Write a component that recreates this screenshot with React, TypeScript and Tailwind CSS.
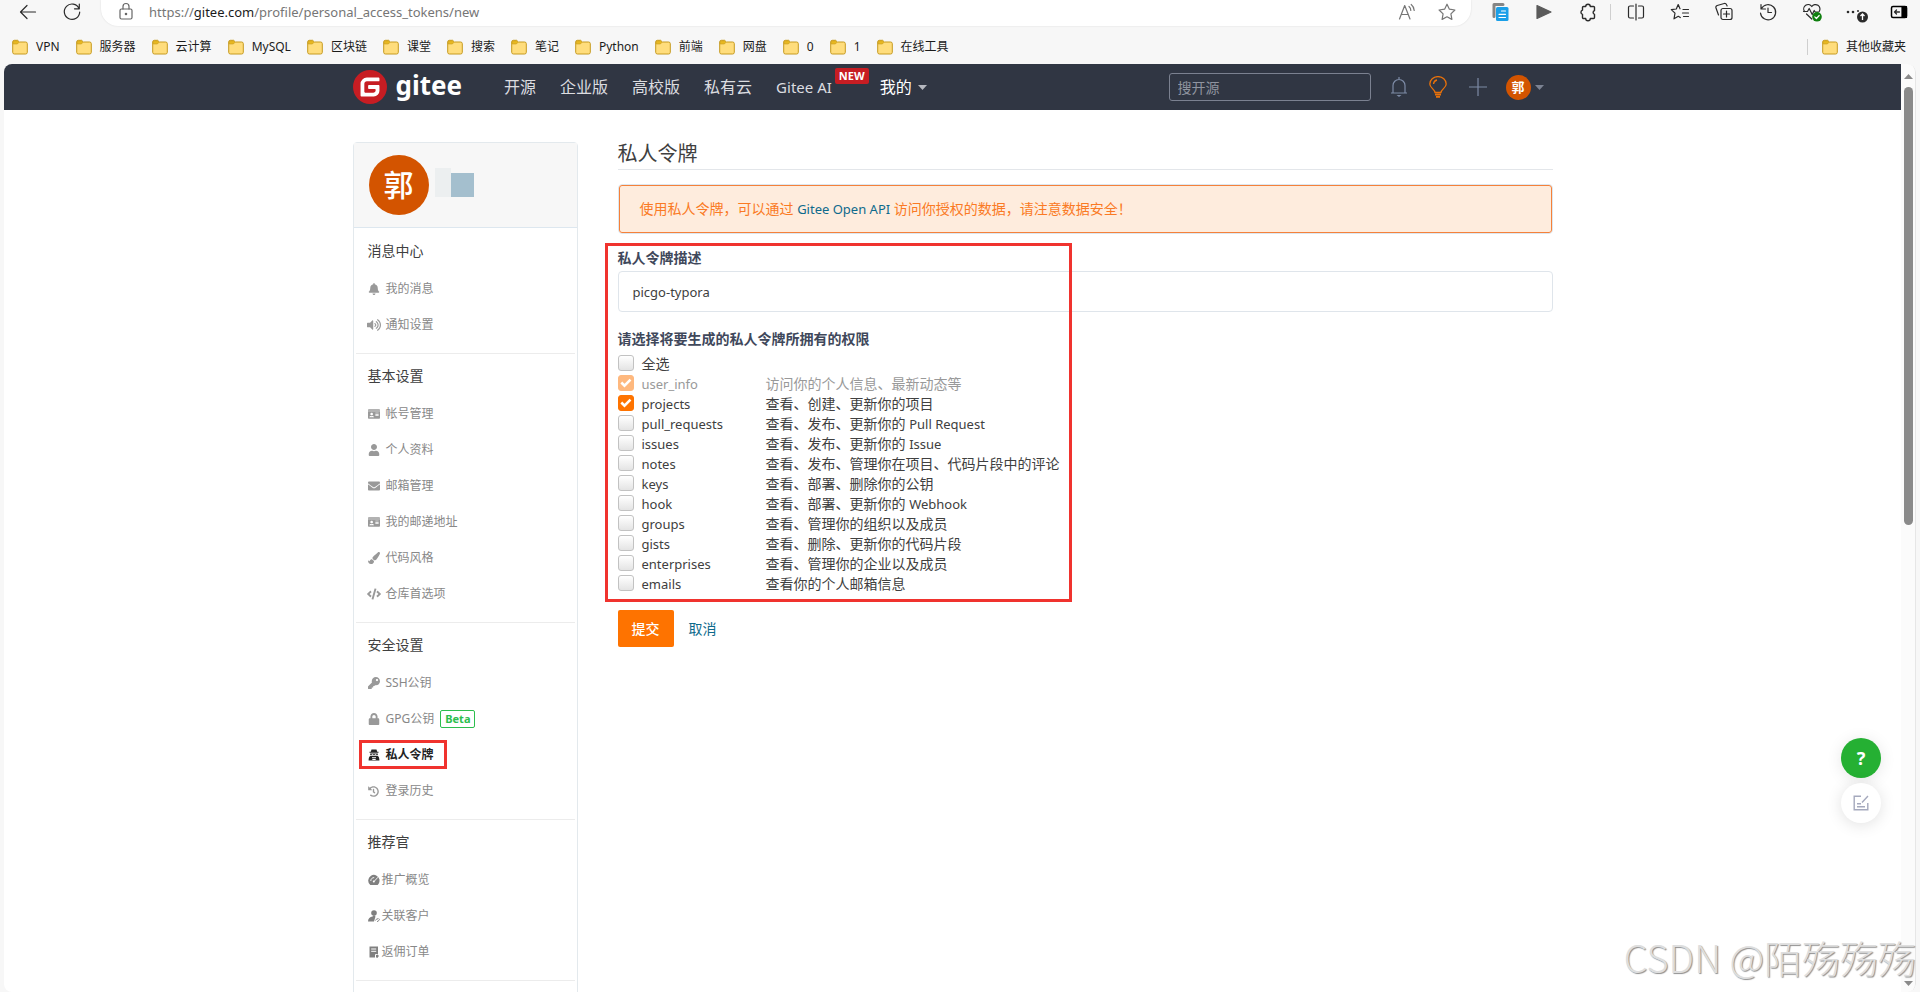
import type { ReactNode } from "react";
import {
  FaBell,
  FaCode,
  FaEnvelope,
  FaHistory,
  FaIdCard,
  FaKey,
  FaLock,
  FaPaintBrush,
  FaUser,
  FaVolumeUp,
} from "react-icons/fa";

/* ---------- Browser chrome ---------- */

function Glyph({ size = 20, children, label }: { size?: number; children: ReactNode; label: string }) {
  return (
    <svg
      width={size}
      height={size}
      viewBox="0 0 20 20"
      fill="none"
      stroke="currentColor"
      strokeWidth="1.2"
      strokeLinecap="round"
      strokeLinejoin="round"
      role="img"
      aria-label={label}
    >
      {children}
    </svg>
  );
}

function ToolButton({ children }: { children: ReactNode }) {
  return (
    <button type="button" className="flex h-[24px] w-[44px] shrink-0 items-center justify-center text-[#2b2b2b] last:w-[42px]">
      {children}
    </button>
  );
}

function FolderIcon() {
  return (
    <svg width="16" height="16" viewBox="0 0 16 16" className="shrink-0" aria-hidden="true">
      <path
        d="M.7 3A1.7 1.7 0 0 1 2.4 1.3h3.2L7.4 3h6.2a1.7 1.7 0 0 1 1.7 1.7v8.6a1.7 1.7 0 0 1-1.7 1.7H2.4A1.7 1.7 0 0 1 .7 13.300z"
        fill="#ffdd7c"
        stroke="#c69a1f"
      />
      <path d="M1.200 5V3A1.200 1.200 0 0 1 2.400 1.800h3L7 3.300 5.400 5z" fill="#e8b820" stroke="#c69a1f" strokeWidth=".6" />
    </svg>
  );
}

const bookmarks = ["VPN", "服务器", "云计算", "MySQL", "区块链", "课堂", "搜索", "笔记", "Python", "前端", "网盘", "0", "1", "在线工具"];

function Bookmark({ name }: { name: string }) {
  return (
    <a href="#" className="flex items-center gap-2 text-[12px] leading-[16px] whitespace-nowrap text-[#1b1b1b]">
      <FolderIcon />
      {name}
    </a>
  );
}

function BrowserBar() {
  return (
    <div className="shrink-0">
      <div className="flex h-[30px] items-start">
        <div className="flex h-[24px] items-center gap-[24px] pl-[18px] text-[#2b2b2b]">
          <button type="button">
            <Glyph label="后退">
              <path d="M17.500 10H2.500M9 3.500 2.500 10 9 16.500" />
            </Glyph>
          </button>
          <button type="button">
            <Glyph label="刷新">
              <path d="M17 6.500A7.700 7.700 0 1 0 17.700 10M17.300 2v4.800h-4.800" />
            </Glyph>
          </button>
        </div>
        <div className="ml-[19px] flex h-[26px] min-w-0 flex-1 items-start rounded-b-[17px] bg-white shadow-[0_0_2px_rgba(0,0,0,0.12)]">
          <div className="flex h-[24px] w-full items-center pr-[14px] pl-[15px]">
            <span className="text-[#666]">
              <Glyph label="安全连接">
                <rect x="4" y="7" width="12" height="10" rx="1.500" />
                <path d="M7 7V4.500a3 3 0 0 1 6 0V7" />
                <circle cx="10" cy="12" r=".7" fill="currentColor" />
              </Glyph>
            </span>
            <span className="ml-[13px] flex-1 text-[13px] leading-[20px] text-[#767676]">
              https://<span className="text-[#1b1b1b]">gitee.com</span>/profile/personal_access_tokens/new
            </span>
            <div className="flex gap-[20px] text-[#767676]">
              <Glyph label="朗读">
                <path d="M2.500 17 7.700 3.500 13 17M4.200 12.500h7M12 4.500a5 5 0 0 1 1.800 4M14.200 2.500a8 8 0 0 1 3 6" />
              </Glyph>
              <Glyph label="收藏">
                <path d="m10 2.200 2.400 5 5.500.8-4 3.900 1 5.500-4.900-2.600-4.900 2.600 1-5.500-4-3.900 5.500-.8z" />
              </Glyph>
            </div>
          </div>
        </div>
        <div className="ml-[7px] flex h-[24px] items-center">
          <ToolButton>
            <Glyph label="文档">
              <path d="M4 14.500V2.500h9" stroke="#858585" strokeWidth="3" />
              <rect x="6" y="5" width="12.500" height="14" rx="1.500" fill="#1a9fe8" stroke="none" />
              <path d="M11.500 9h4M9 12.300h6.500M9 15.500h6.500" stroke="#fff" />
            </Glyph>
          </ToolButton>
          <ToolButton>
            <Glyph label="播放">
              <path d="M3 3.500v13L17 10z" fill="#5b5b5b" stroke="#5b5b5b" />
            </Glyph>
          </ToolButton>
          <ToolButton>
            <Glyph label="扩展">
              <path
                d="M7.700 4.500a2.300 2.300 0 0 1 4.600 0h3.200a1 1 0 0 1 1 1v3a2 2 0 0 0 0 3.800v3.200a1 1 0 0 1-1 1h-3.200a2.300 2.300 0 0 1-4.600 0H5.500a1 1 0 0 1-1-1v-3.200a2.200 2.200 0 0 1 0-4.200V5.500a1 1 0 0 1 1-1z"
                strokeWidth="1.400"
              />
            </Glyph>
          </ToolButton>
          <div className="h-[16px] w-[4px] border-l border-[#cfcfcf]" />
          <ToolButton>
            <Glyph label="分屏">
              <path d="M7.500 4H4a1.500 1.500 0 0 0-1.500 1.500v9A1.500 1.500 0 0 0 4 16h3.500M12.500 4H16a1.500 1.500 0 0 1 1.500 1.500v9A1.500 1.500 0 0 1 16 16h-3.500M10 2v16" />
            </Glyph>
          </ToolButton>
          <ToolButton>
            <Glyph label="收藏夹">
              <path d="M13 7.500h5.500M12.500 11h6M13.500 14.500h5M10 6.800 8.200 2.500 6.300 7l-5 .6 3.700 3.500-1 5.700 4.300-2.500 2 1.200" />
            </Glyph>
          </ToolButton>
          <ToolButton>
            <Glyph label="集锦">
              <rect x="7" y="6.500" width="11" height="11" rx="2" />
              <path d="M12.500 9v6M9.500 12h6M4.500 13 2 6a2 2 0 0 1 1.200-2.500l7-2a2 2 0 0 1 2.500 1.400l.4 1.100" />
            </Glyph>
          </ToolButton>
          <ToolButton>
            <Glyph label="历史记录">
              <path d="M3 2.500V7h4.500M3.300 6.800a7.600 7.600 0 1 1-.8 4.200M10 6v4.500h3.500" />
            </Glyph>
          </ToolButton>
          <ToolButton>
            <Glyph label="浏览器概要">
              <path d="M2.500 9.500a4.200 4.200 0 0 1 7.300-5 4.200 4.200 0 0 1 7.400 5M4.500 12l5.300 5M1.500 9.500h4l1.700-3 3 6 2-4 1 1.500h3" />
              <circle cx="15" cy="14.800" r="4.800" fill="#108010" stroke="none" />
              <path d="m12.800 14.900 1.600 1.600 2.800-3" stroke="#fff" />
            </Glyph>
          </ToolButton>
          <ToolButton>
            <svg width="24" height="22" viewBox="0 0 24 22" role="img" aria-label="设置及其他">
              <g fill="#2b2b2b">
                <circle cx="4" cy="11" r="1.300" />
                <circle cx="9" cy="11" r="1.300" />
                <circle cx="14" cy="10" r="1" />
                <circle cx="18.500" cy="16" r="5.500" />
              </g>
              <path d="M18.500 19v-6m-2 2 2-2 2 2" stroke="#fff" strokeWidth="1.300" fill="none" />
            </svg>
          </ToolButton>
          <ToolButton>
            <Glyph label="侧边栏">
              <rect x="2.500" y="4.500" width="15" height="11" rx="1.500" strokeWidth="1.500" stroke="#000" />
              <path d="M13 4.500h4.500v11H13z" fill="#000" stroke="#000" />
              <path d="M10.500 10H5.500m2-2-2 2 2 2" strokeWidth="1.300" />
            </Glyph>
          </ToolButton>
        </div>
      </div>
      <nav aria-label="书签" className="flex h-[34px] items-center gap-4 pr-[14px] pl-[12px]">
        {bookmarks.map((name) => (
          <Bookmark key={name} name={name} />
        ))}
        <div className="ml-auto flex items-center gap-[14px]">
          <div className="h-[16px] border-l border-[#cfcfcf]" />
          <Bookmark name="其他收藏夹" />
        </div>
      </nav>
    </div>
  );
}

/* ---------- Site header ---------- */

function Caret({ className }: { className: string }) {
  return (
    <svg width="9" height="5" viewBox="0 0 9 5" className={className} aria-hidden="true">
      <path d="M0 0h9L4.500 5z" fill="currentColor" />
    </svg>
  );
}

function SiteHeader() {
  return (
    <header className="h-[46px] bg-[#303643]">
      <div className="mx-auto flex h-full max-w-[1200px] items-center pr-[9px]">
        <a href="#" className="flex items-center gap-[9px] text-white">
          <svg width="34" height="34" viewBox="0 0 24 24" aria-hidden="true">
            <circle cx="12" cy="12" r="11" fill="#fff" />
            <path
              fill="#c71d23"
              d="M11.984 0A12 12 0 0 0 0 12a12 12 0 0 0 12 12 12 12 0 0 0 12-12A12 12 0 0 0 12 0a12 12 0 0 0-.016 0zm6.090 5.333c.328 0 .593.266.592.593v1.482a.594.594 0 0 1-.593.592H9.777c-.982 0-1.778.796-1.778 1.778v5.630c0 .327.266.592.593.592h5.630c.982 0 1.778-.796 1.778-1.778v-.296a.593.593 0 0 0-.592-.593h-4.150a.592.592 0 0 1-.592-.592v-1.482a.593.593 0 0 1 .593-.592h6.815c.327 0 .593.265.593.592v3.408a4 4 0 0 1-4 4H5.926a.593.593 0 0 1-.593-.593V9.778a4.444 4.444 0 0 1 4.445-4.444h8.296z"
            />
          </svg>
          <span className="pb-[4px] text-[26px] leading-[30px] font-bold">gitee</span>
        </a>
        <nav aria-label="主导航" className="ml-[42px] flex items-center gap-[24px] text-[16px] leading-[24px] whitespace-nowrap text-[#dcdde0]">
          <a href="#">开源</a>
          <a href="#">企业版</a>
          <a href="#">高校版</a>
          <a href="#">私有云</a>
          <a href="#" className="relative mr-[24px] text-[15px]">
            Gitee AI
            <span className="absolute -top-[7px] left-full ml-[3px] rounded-[2px] bg-[#c71d23] px-[4px] text-[11px] leading-[16px] font-bold text-white">
              NEW
            </span>
          </a>
          <a href="#" className="flex items-center gap-[6px] text-white">
            我的
            <Caret className="text-[#b5b8bf]" />
          </a>
        </nav>
        <input
          type="search"
          aria-label="搜开源"
          placeholder="搜开源"
          className="ml-auto h-[28px] w-[202px] rounded-[3px] border border-[#7b8190] bg-transparent px-[8px] text-[14px] text-white placeholder:text-[#8f949f]"
        />
        <button type="button" aria-label="通知" className="ml-[18px] text-[#7d8ba6]">
          <svg width="20" height="22" viewBox="0 0 20 22" fill="none" stroke="currentColor" strokeWidth="1.200">
            <path d="M2 17h16M4 17V9.500a6 6 0 0 1 12 0V17M10 3.500V1" />
            <path d="M7.500 19h5L10 21z" fill="currentColor" stroke="none" />
          </svg>
        </button>
        <button type="button" aria-label="提示" className="ml-[20px] text-[#e8710a]">
          <svg width="18" height="22" viewBox="0 0 18 22" fill="none" stroke="currentColor" strokeWidth="1.300">
            <path d="M6 16.500C5.800 13 .8 12 .8 8a8.200 7.400 0 0 1 16.400 0c0 4-5 5-5.200 8.500zM4.500 8A4.500 4.500 0 0 1 8 4" />
            <path d="M6 18.500h6M7 20.800h4" strokeWidth="1.800" />
          </svg>
        </button>
        <button type="button" aria-label="新建" className="ml-[22px] text-[#7d8ba6]">
          <svg width="18" height="18" viewBox="0 0 18 18" stroke="currentColor" strokeWidth="1.200">
            <path d="M9 0v18M0 9h18" />
          </svg>
        </button>
        <button type="button" aria-label="账户" className="ml-[19px] flex items-center gap-[4px]">
          <span className="flex size-[25px] items-center justify-center rounded-full bg-[#d35400] text-[13px] leading-[20px] font-bold text-white">
            郭
          </span>
          <Caret className="text-[#7b8292]" />
        </button>
      </div>
    </header>
  );
}

/* ---------- Sidebar ---------- */

function TokenIcon() {
  return (
    <svg width="12" height="12" viewBox="0 0 12 12" fill="currentColor" aria-hidden="true">
      <path d="M3.500.5h5l.7 2.200h1.300v1H1.500v-1h1.300zM2.200 4.500h7.600v1.700H2.200zM.6 11.500c0-2.500.5-4 1.700-4.600h7.400c1.200.6 1.700 2.100 1.700 4.600z" />
      <path d="M3.700 5.100h1.600v.7H3.700zM6.700 5.100h1.600v.7H6.700zM4 8.300h4v.7H4zM4.300 9.800h3.400v1.200H4.300z" fill="#fff" />
    </svg>
  );
}

function DashboardIcon() {
  return (
    <svg width="12" height="12" viewBox="0 0 12 12" aria-hidden="true">
      <path d="M2.300 11A5.700 5.700 0 1 1 11.500 5.500c.2 2.500-.5 4.300-1.800 5.500z" fill="currentColor" />
      <path d="M2.800 7a3.200 3.200 0 0 1 3.400-3.400M6 7.500l4-4.300" stroke="#fff" strokeWidth=".9" fill="none" />
      <circle cx="5.800" cy="7.500" r="1" fill="#fff" />
    </svg>
  );
}

function CustomerIcon() {
  return (
    <svg width="12" height="12" viewBox="0 0 12 12" aria-hidden="true">
      <circle cx="6" cy="3" r="2.800" fill="currentColor" />
      <path d="M0 11.500C0 8.500 2 7 4.500 6.500L6 5l1.500 1.500-1.500 5z" fill="currentColor" />
      <path d="m7.500 10.500 1.500-2 1 .8M9 11.300l1 .2 1.500-2.200-1-.8" stroke="currentColor" strokeWidth=".9" fill="none" />
    </svg>
  );
}

function OrderIcon() {
  return (
    <svg width="12" height="12" viewBox="0 0 12 12" aria-hidden="true">
      <path d="M1.500.5h8.500v11H1.500z" fill="currentColor" />
      <path d="M3.200 3h5M3.200 5.300h5M7.500 12V8.500H11" stroke="#fff" strokeWidth="1" fill="none" />
      <path d="M9.300 8.500v3M8 10h3" stroke="currentColor" strokeWidth="1" />
    </svg>
  );
}

type Item = { label: string; icon: ReactNode; badge?: string; active?: boolean };
type Section = { title: string; tight?: boolean; items: Item[] };

const sections: Section[] = [
  {
    title: "消息中心",
    items: [
      { label: "我的消息", icon: <FaBell size={12} /> },
      { label: "通知设置", icon: <FaVolumeUp size={14} /> },
    ],
  },
  {
    title: "基本设置",
    items: [
      { label: "帐号管理", icon: <FaIdCard size={12} /> },
      { label: "个人资料", icon: <FaUser size={12} /> },
      { label: "邮箱管理", icon: <FaEnvelope size={12} /> },
      { label: "我的邮递地址", icon: <FaIdCard size={12} /> },
      { label: "代码风格", icon: <FaPaintBrush size={12} /> },
      { label: "仓库首选项", icon: <FaCode size={14} /> },
    ],
  },
  {
    title: "安全设置",
    items: [
      { label: "SSH公钥", icon: <FaKey size={12} /> },
      { label: "GPG公钥", icon: <FaLock size={12} />, badge: "Beta" },
      { label: "私人令牌", icon: <TokenIcon />, active: true },
      { label: "登录历史", icon: <FaHistory size={11} /> },
    ],
  },
  {
    title: "推荐官",
    tight: true,
    items: [
      { label: "推广概览", icon: <DashboardIcon /> },
      { label: "关联客户", icon: <CustomerIcon /> },
      { label: "返佣订单", icon: <OrderIcon /> },
    ],
  },
];

function SidebarItem({ item, tight }: { item: Item; tight?: boolean }) {
  return (
    <li className="flex h-[36px] items-center">
      <a
        href="#"
        aria-current={item.active ? "page" : undefined}
        className={`relative flex items-center text-[12px] leading-[18px] ${tight ? "gap-[2px]" : "gap-[6px]"} ${
          item.active ? "font-bold text-[#222]" : "text-[#888]"
        }`}
      >
        <span className={`flex w-[12px] items-center justify-center ${item.active ? "text-[#222]" : tight ? "text-[#808080]" : "text-[#999]"}`}>
          <span className="shrink-0">{item.icon}</span>
        </span>
        {item.label}
        {item.badge && (
          <span className="rounded-[2px] border border-[#2cbe4e] px-[4px] text-[11px] leading-[16px] font-bold text-[#2cbe4e]">
            {item.badge}
          </span>
        )}
        {item.active && (
          <span className="pointer-events-none absolute -top-[6px] -right-[13px] -bottom-[5px] -left-[9px] border-3 border-[#f0332e]" />
        )}
      </a>
    </li>
  );
}

function Sidebar() {
  return (
    <aside className="w-[225px] shrink-0 rounded-t-[4px] border border-[#e3e9ed]">
      <div className="flex h-[85px] items-center border-b border-[#dde7ef] bg-[#f7f7f7] pl-[15px]">
        <span className="flex size-[60px] items-center justify-center rounded-full bg-[#d35400] text-[30px] leading-[40px] font-medium text-white">
          郭
        </span>
        <span className="mb-[30px] ml-[6px] h-[29px] w-[16px] self-end bg-[#eceff0]" />
        <span className="mb-[30px] h-[24px] w-[23px] self-end bg-[#a4bfce]" />
      </div>
      <div className="px-[2px] pt-px">
        {sections.map((section) => (
          <section key={section.title}>
            <h4 className="flex h-[42px] items-center pt-[2px] pl-[12px] text-[14px] leading-[20px] text-[#404040]">{section.title}</h4>
            <ul className="pb-[10px] pl-[12px]">
              {section.items.map((item) => (
                <SidebarItem key={item.label} item={item} tight={section.tight} />
              ))}
            </ul>
            <div className="h-px bg-[#ececec]" />
          </section>
        ))}
      </div>
      <div className="h-[60px]" />
    </aside>
  );
}

/* ---------- Token form ---------- */

type Scope = { id: string; text: string; latin?: string; checked?: boolean; disabled?: boolean };

const scopes: Scope[] = [
  { id: "user_info", text: "访问你的个人信息、最新动态等", checked: true, disabled: true },
  { id: "projects", text: "查看、创建、更新你的项目", checked: true },
  { id: "pull_requests", text: "查看、发布、更新你的", latin: "Pull Request" },
  { id: "issues", text: "查看、发布、更新你的", latin: "Issue" },
  { id: "notes", text: "查看、发布、管理你在项目、代码片段中的评论" },
  { id: "keys", text: "查看、部署、删除你的公钥" },
  { id: "hook", text: "查看、部署、更新你的", latin: "Webhook" },
  { id: "groups", text: "查看、管理你的组织以及成员" },
  { id: "gists", text: "查看、删除、更新你的代码片段" },
  { id: "enterprises", text: "查看、管理你的企业以及成员" },
  { id: "emails", text: "查看你的个人邮箱信息" },
];

function Tick({ id, checked, disabled }: { id: string; checked?: boolean; disabled?: boolean }) {
  return (
    <span className="mt-px mr-[8px] grid size-[16px] shrink-0 self-start">
      <input
        id={id}
        type="checkbox"
        defaultChecked={checked}
        disabled={disabled}
        className="peer col-start-1 row-start-1 size-[16px] appearance-none rounded-[3px] border border-[#c2c2c2] bg-linear-to-b from-white to-[#e4e4e4] checked:border-[#fe7300] checked:bg-[#fe7300] checked:bg-none disabled:opacity-50"
      />
      <svg
        viewBox="0 0 16 16"
        className="pointer-events-none z-10 col-start-1 row-start-1 hidden size-[16px] peer-checked:block"
        fill="none"
        stroke="#fff"
        strokeWidth="2.600"
        aria-hidden="true"
      >
        <path d="m3.300 7.500 3.200 3.200 6-6" />
      </svg>
    </span>
  );
}

function TokenForm() {
  return (
    <main className="min-w-0 flex-1 text-[14px] text-[#404040]">
      <h1 className="h-[28px] border-b border-[#e3e6ea] text-[20px] leading-[24px]">私人令牌</h1>
      <div className="mt-[14px] rounded-[4px] border border-[#dde7ef]">
        <p className="rounded-[3px] border border-[#f5813a] bg-[#feecdd] px-[20px] py-[13px] leading-[20px] text-[#fa7a24]">
          使用私人令牌，可以通过{" "}
          <a href="#" className="text-[13px] text-[#0e6a8c]">
            Gitee Open API
          </a>{" "}
          访问你授权的数据，请注意数据安全！
        </p>
      </div>
      <form onSubmit={(e) => e.preventDefault()}>
        <div className="relative mt-[15px]">
          <label htmlFor="description" className="block leading-[18px] font-bold text-[#40485b]">
            私人令牌描述
          </label>
          <input
            id="description"
            type="text"
            defaultValue="picgo-typora"
            className="mt-[4px] block h-[41px] w-full rounded-[4px] border border-[#dfe5eb] bg-white px-[14px] text-[13px] text-[#404040]"
          />
          <fieldset className="mt-[18px]">
            <legend className="leading-[18px] font-bold text-[#40485b]">请选择将要生成的私人令牌所拥有的权限</legend>
            <div className="mt-[6px]">
              <div className="flex h-[20px] items-center">
                <Tick id="all" />
                <label htmlFor="all" className="leading-[20px]">
                  全选
                </label>
              </div>
              {scopes.map((s) => (
                <div key={s.id} className={`flex h-[20px] items-center ${s.disabled ? "text-[#999]" : ""}`}>
                  <Tick id={s.id} checked={s.checked} disabled={s.disabled} />
                  <label htmlFor={s.id} className="flex items-center leading-[20px] whitespace-nowrap">
                    <span className="w-[124px] text-[13px]">{s.id}</span>
                    <span>
                      {s.text} {s.latin && <span className="text-[13px]">{s.latin}</span>}
                    </span>
                  </label>
                </div>
              ))}
            </div>
          </fieldset>
          <div className="pointer-events-none absolute -top-[6px] -bottom-[8px] -left-[13px] w-[467px] border-3 border-[#f0332e]" />
        </div>
        <div className="mt-[16px] flex items-center gap-[15px]">
          <button type="submit" className="h-[37px] w-[56px] rounded-[2px] bg-[#fe7300] leading-[20px] font-medium text-white">
            提交
          </button>
          <a href="#" className="leading-[20px] text-[#0e6a8c]">
            取消
          </a>
        </div>
      </form>
    </main>
  );
}

/* ---------- Page ---------- */

function Scrollbar() {
  return (
    <div aria-hidden="true" className="flex w-[15px] shrink-0 flex-col items-center rounded-r-[8px] border-r border-[#e6e6e6] bg-[#fbfbfb] pt-[10px] pb-[6px]">
      <svg width="9" height="5" viewBox="0 0 9 5">
        <path d="M0 5h9L4.500 0z" fill="#8a8a8a" />
      </svg>
      <div className="mt-[8px] h-[48%] w-[9px] rounded-full bg-[#8a8a8a]" />
      <Caret className="mt-auto text-[#8a8a8a]" />
    </div>
  );
}

export default function App() {
  return (
    <div className="relative flex h-screen flex-col overflow-hidden bg-[#f7f7f7] font-['Noto_Sans','Noto_Sans_CJK_SC',sans-serif]">
      <BrowserBar />
      <div className="mx-[4px] flex min-h-0 flex-1 overflow-hidden rounded-[8px] bg-white">
        <div className="min-w-0 flex-1 overflow-hidden">
          <SiteHeader />
          <div className="mx-auto flex max-w-[1200px] items-start gap-[40px] pt-[32px]">
            <Sidebar />
            <TokenForm />
          </div>
        </div>
        <Scrollbar />
      </div>
      <div className="absolute top-[738px] right-[39px] flex flex-col gap-[5px]">
        <button
          type="button"
          aria-label="帮助"
          className="flex size-[40px] items-center justify-center rounded-full bg-[#25b033] text-[18px] leading-[24px] font-bold text-white shadow-[0_2px_16px_rgba(0,0,0,0.1)]"
        >
          ?
        </button>
        <button
          type="button"
          aria-label="反馈"
          className="flex size-[40px] items-center justify-center rounded-full bg-white text-[#a5a9bd] shadow-[0_2px_16px_rgba(0,0,0,0.12)]"
        >
          <svg width="16" height="16" viewBox="0 0 16 16" fill="none" stroke="currentColor" strokeWidth="1.400">
            <path d="M8 1.200H1.200v13.600h13.600V8M9 7.500l6-6.500M4 8.800h4M4 11.800h8" />
          </svg>
        </button>
      </div>
      <div className="pointer-events-none absolute right-[4px] bottom-[7px] font-['Noto_Sans_CJK_SC',sans-serif] text-[38px] leading-[56px] font-light text-[#dedede] [text-shadow:1px_1px_1px_#8f8f8f]">
        CSDN @陌殇殇殇
      </div>
    </div>
  );
}
